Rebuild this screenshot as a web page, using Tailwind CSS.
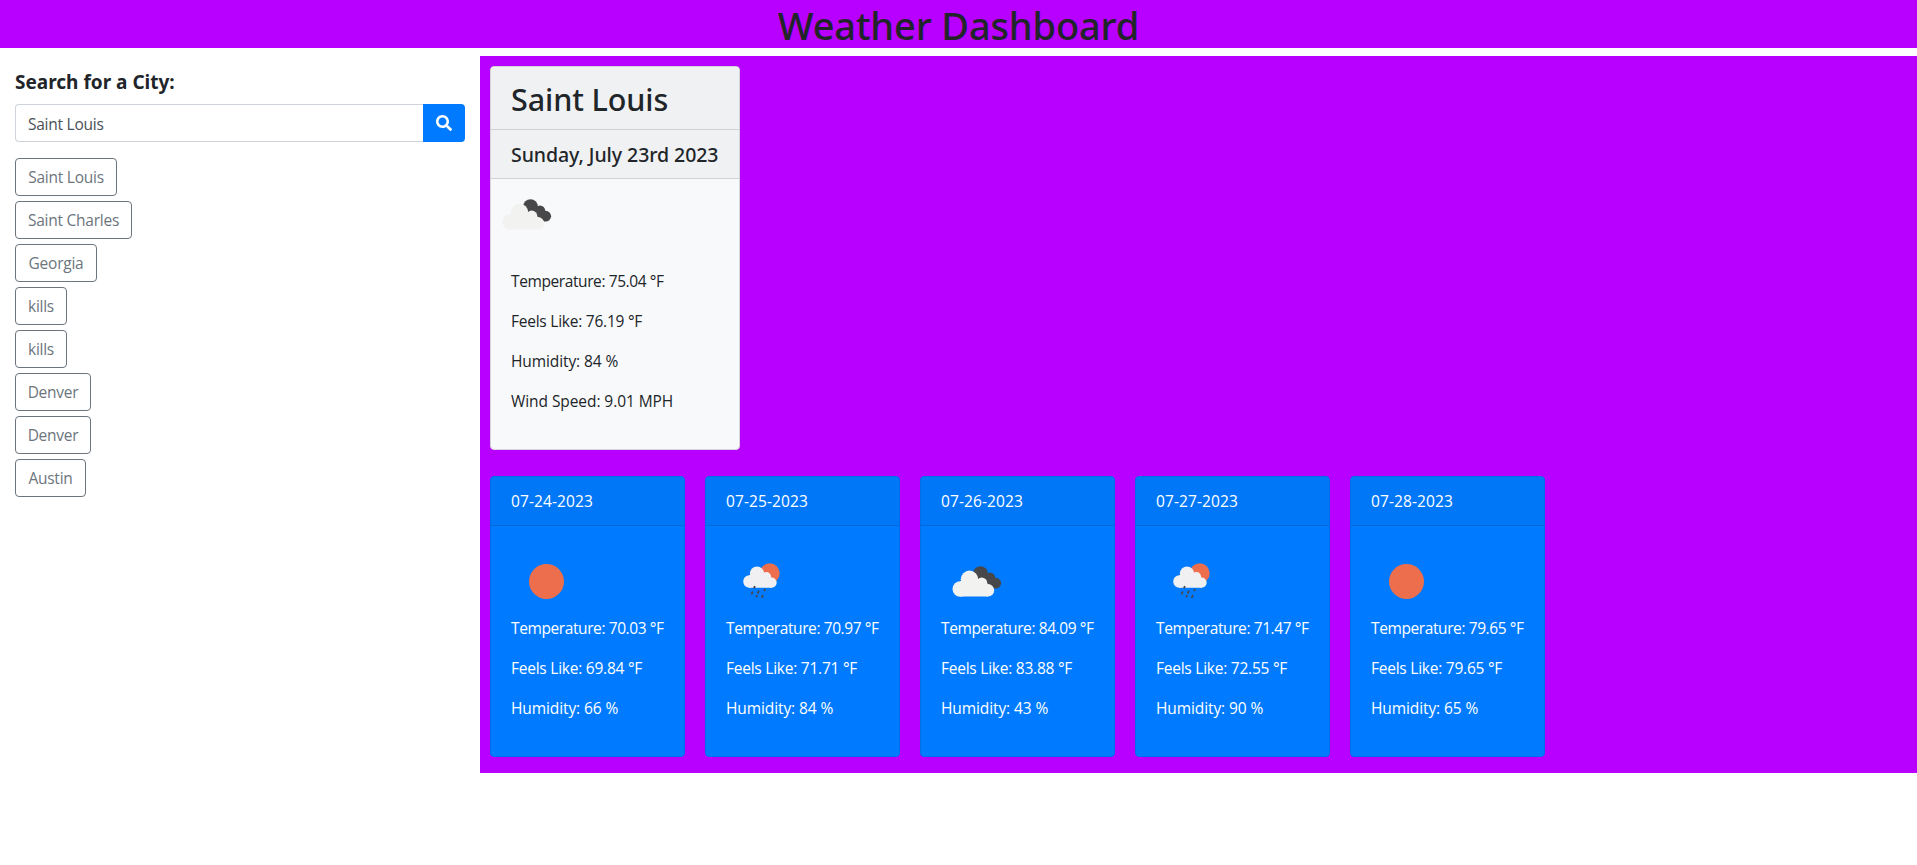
<!DOCTYPE html>
<html lang="en">
<head>
<meta charset="utf-8">
<title>Weather Dashboard</title>
<script src="https://cdn.jsdelivr.net/npm/@tailwindcss/browser@4"></script>
</head>
<body class="bg-white font-['Open_Sans',sans-serif] text-[15.5px] leading-6 text-[#212529]">
<svg class="hidden">
  <symbol id="clouds" viewBox="0 0 50 31">
    <g fill="#48484a"><circle cx="28.5" cy="7.5" r="7.3"/><circle cx="38" cy="11.7" r="5.2"/><circle cx="43.7" cy="17.2" r="5.4"/><path d="M24 8L37 7L46 14L43 22.5L34 19Z"/></g>
    <g fill="#f2f2f0"><circle cx="8.2" cy="23" r="7.7"/><circle cx="17.5" cy="13.3" r="8.7"/><circle cx="29.7" cy="17.2" r="5.6"/><circle cx="36" cy="24.3" r="6.2"/><path d="M8 15.3L25 13L36 18V30.6H8Z"/></g>
  </symbol>
  <symbol id="rain" viewBox="0 0 37 36">
    <circle cx="26.7" cy="10.3" r="10" fill="#ec6e4c"/>
    <g fill="#f0f0f2"><circle cx="6.4" cy="18.5" r="6.2"/><circle cx="14" cy="10.5" r="7.1"/><circle cx="23.4" cy="13.8" r="4.7"/><circle cx="28.6" cy="19.6" r="5.1"/><path d="M6 12.3L20 10L29 15V24.7H6Z"/></g>
    <path d="M11.6 23.8L11.3 24.6M9.4 29.3L8.8 30.6M15.6 28.4L15 29.8M21.8 26.8L21.5 27.4M13.8 32.9L13.6 33.4M19.6 32.8L19.1 34" stroke="#48484a" stroke-width="1.9" stroke-linecap="round"/>
  </symbol>
</svg>

<header class="h-12 bg-[#b700ff] text-center">
  <h1 class="pt-px font-['Noto_Sans'] text-[38px] font-medium leading-[48px] tracking-[-0.15px]">Weather Dashboard</h1>
</header>

<main class="mt-2 flex items-start">
  <aside class="w-[480px] shrink-0 px-[15px] pt-[14px]">
    <h2 class="font-['Noto_Sans'] text-[19px] font-bold leading-6">Search for a City:</h2>
    <div class="mt-[10px] flex h-[38px]">
      <div class="flex flex-1 items-center rounded-l border border-r-0 border-[#ced4da] px-3 pt-[2px] tracking-[-0.25px] text-[#495057]">Saint Louis</div>
      <button class="flex w-[42px] items-center justify-center rounded-r bg-[#007bff] text-white">
        <svg class="h-4 w-4 fill-current" viewBox="0 0 512 512"><path d="M505 442.700L405.300 343c-4.500-4.500-10.600-7-17-7H372c27.600-35.300 44-79.700 44-128C416 93.100 322.900 0 208 0S0 93.100 0 208s93.100 208 208 208c48.300 0 92.700-16.400 128-44v16.300c0 6.400 2.500 12.500 7 17l99.700 99.700c9.400 9.400 24.600 9.400 33.900 0l28.300-28.300c9.400-9.400 9.400-24.600.1-34zM208 336c-70.700 0-128-57.200-128-128 0-70.700 57.200-128 128-128 70.700 0 128 57.200 128 128 0 70.700-57.200 128-128 128z"/></svg>
      </button>
    </div>
    <div class="mt-4 flex flex-col gap-[5px] tracking-[-0.25px] text-[#6c757d]">
      <button class="h-[38px] w-[102px] rounded border border-[#6c757d] pb-px">Saint Louis</button>
      <button class="h-[38px] w-[117px] rounded border border-[#6c757d] pb-px">Saint Charles</button>
      <button class="h-[38px] w-[82px] rounded border border-[#6c757d] pb-px">Georgia</button>
      <button class="h-[38px] w-[52px] rounded border border-[#6c757d] pb-px">kills</button>
      <button class="h-[38px] w-[52px] rounded border border-[#6c757d] pb-px">kills</button>
      <button class="h-[38px] w-[76px] rounded border border-[#6c757d] pb-px">Denver</button>
      <button class="h-[38px] w-[76px] rounded border border-[#6c757d] pb-px">Denver</button>
      <button class="h-[38px] w-[71px] rounded border border-[#6c757d] pb-px">Austin</button>
    </div>
  </aside>

  <section class="h-[717px] flex-1 bg-[#b700ff] pl-[10px] pt-[10px]">
    <article class="h-[384px] w-[250px] rounded border border-[#d6d3da] bg-[#f8f9fa]">
      <div class="h-[63px] rounded-t border-b border-[#d0d1d2] bg-[#f0f1f2] px-5 pt-[13px]">
        <h2 class="font-['Noto_Sans'] text-[30.5px] font-medium leading-[38px] tracking-[-0.1px]">Saint Louis</h2>
      </div>
      <div class="h-[49px] border-b border-[#d0d1d2] bg-[#f0f1f2] px-5 pt-[13px]">
        <h3 class="font-['Noto_Sans'] text-[19.5px] font-medium leading-6 tracking-[-0.06px]">Sunday, July 23rd 2023</h3>
      </div>
      <svg class="ml-[11px] mt-5 h-[31px] w-[50px]"><use href="#clouds"/></svg>
      <div class="mt-[39px] flex flex-col gap-4 px-5">
        <p class="tracking-[-0.4px]">Temperature: 75.04 °F</p>
        <p class="tracking-[-0.24px]">Feels Like: 76.19 °F</p>
        <p class="tracking-[-0.1px]">Humidity: 84 %</p>
        <p class="tracking-[-0.07px]">Wind Speed: 9.01 MPH</p>
      </div>
    </article>

    <div class="mt-[26px] flex gap-5 text-white">
      <article class="h-[281px] w-[195px] rounded border border-[#006fe6] bg-[#007bff]">
        <div class="h-[49px] rounded-t border-b border-[#0069da] bg-[#0077f7] px-5 pt-3 tracking-[0.1px]">07-24-2023</div>
        <div class="h-[90px] pl-[38px] pt-[38px]"><div class="size-[35px] rounded-full bg-[#ec6e4c]"></div></div>
        <div class="flex flex-col gap-4 px-5">
          <p class="whitespace-nowrap tracking-[-0.4px]">Temperature: 70.03 °F</p>
          <p class="tracking-[-0.24px]">Feels Like: 69.84 °F</p>
          <p class="tracking-[-0.1px]">Humidity: 66 %</p>
        </div>
      </article>
      <article class="h-[281px] w-[195px] rounded border border-[#006fe6] bg-[#007bff]">
        <div class="h-[49px] rounded-t border-b border-[#0069da] bg-[#0077f7] px-5 pt-3 tracking-[0.1px]">07-25-2023</div>
        <div class="h-[90px] pl-[37px] pt-[37px]"><svg class="h-9 w-[37px]"><use href="#rain"/></svg></div>
        <div class="flex flex-col gap-4 px-5">
          <p class="whitespace-nowrap tracking-[-0.4px]">Temperature: 70.97 °F</p>
          <p class="tracking-[-0.24px]">Feels Like: 71.71 °F</p>
          <p class="tracking-[-0.1px]">Humidity: 84 %</p>
        </div>
      </article>
      <article class="h-[281px] w-[195px] rounded border border-[#006fe6] bg-[#007bff]">
        <div class="h-[49px] rounded-t border-b border-[#0069da] bg-[#0077f7] px-5 pt-3 tracking-[0.1px]">07-26-2023</div>
        <div class="h-[90px] pl-[31px] pt-10"><svg class="h-[31px] w-[50px]"><use href="#clouds"/></svg></div>
        <div class="flex flex-col gap-4 px-5">
          <p class="whitespace-nowrap tracking-[-0.4px]">Temperature: 84.09 °F</p>
          <p class="tracking-[-0.24px]">Feels Like: 83.88 °F</p>
          <p class="tracking-[-0.1px]">Humidity: 43 %</p>
        </div>
      </article>
      <article class="h-[281px] w-[195px] rounded border border-[#006fe6] bg-[#007bff]">
        <div class="h-[49px] rounded-t border-b border-[#0069da] bg-[#0077f7] px-5 pt-3 tracking-[0.1px]">07-27-2023</div>
        <div class="h-[90px] pl-[37px] pt-[37px]"><svg class="h-9 w-[37px]"><use href="#rain"/></svg></div>
        <div class="flex flex-col gap-4 px-5">
          <p class="whitespace-nowrap tracking-[-0.4px]">Temperature: 71.47 °F</p>
          <p class="tracking-[-0.24px]">Feels Like: 72.55 °F</p>
          <p class="tracking-[-0.1px]">Humidity: 90 %</p>
        </div>
      </article>
      <article class="h-[281px] w-[195px] rounded border border-[#006fe6] bg-[#007bff]">
        <div class="h-[49px] rounded-t border-b border-[#0069da] bg-[#0077f7] px-5 pt-3 tracking-[0.1px]">07-28-2023</div>
        <div class="h-[90px] pl-[38px] pt-[38px]"><div class="size-[35px] rounded-full bg-[#ec6e4c]"></div></div>
        <div class="flex flex-col gap-4 px-5">
          <p class="whitespace-nowrap tracking-[-0.4px]">Temperature: 79.65 °F</p>
          <p class="tracking-[-0.24px]">Feels Like: 79.65 °F</p>
          <p class="tracking-[-0.1px]">Humidity: 65 %</p>
        </div>
      </article>
    </div>
  </section>
</main>
</body>
</html>
